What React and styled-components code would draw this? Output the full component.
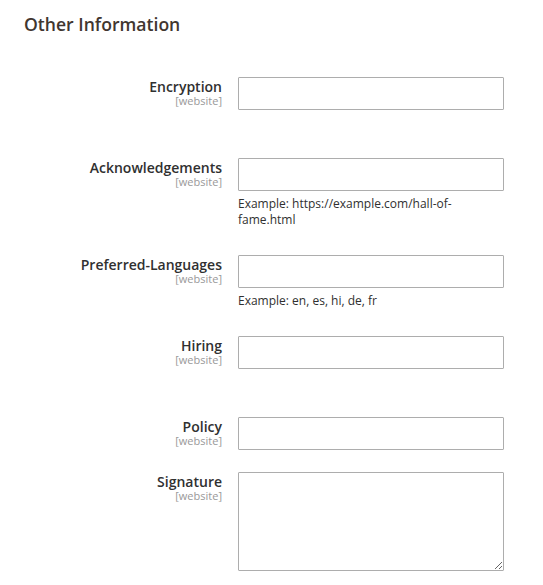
import React from 'react'
import styled, { createGlobalStyle } from 'styled-components'

const GlobalStyle = createGlobalStyle`
    body {
        margin: 0;
        background: #ffffff;
        font-family: "Open Sans", "Liberation Sans", sans-serif;
    }
`

const fields = [
    { label: 'Encryption', space: 48 },
    { label: 'Acknowledgements', note: 'Example: https://example.com/hall-of-fame.html', space: 27 },
    { label: 'Preferred-Languages', note: 'Example: en, es, hi, de, fr', space: 27 },
    { label: 'Hiring', space: 48 },
    { label: 'Policy', space: 22 },
    { label: 'Signature', multiline: true, space: 0 },
]

const App = () => {
    return (
        <>
            <GlobalStyle />
            <Section>
                <Legend>Other Information</Legend>
                {fields.map((field) => (
                    <Row key={field.label} $space={field.space}>
                        <Label>
                            <LabelText>{field.label}</LabelText>
                            <Scope>[website]</Scope>
                        </Label>
                        <Control>
                            {field.multiline ? <TextArea /> : <Input type="text" />}
                            {field.note && <Note>{field.note}</Note>}
                        </Control>
                    </Row>
                ))}
            </Section>
        </>
    )
}

export default App

const Section = styled.div`
    padding: 14px 0 0 24px;
`
const Legend = styled.h2`
    margin: 0 0 43px 0;
    font-size: 17.6px;
    line-height: 20px;
    font-weight: 600;
    color: #41362f;
`
const Row = styled.div`
    display: flex;
    gap: 16px;
    margin-bottom: ${props => props.$space}px;
`
const Label = styled.div`
    width: 198px;
    text-align: right;
    padding-top: 2px;
`
const LabelText = styled.div`
    font-size: 14px;
    line-height: 16px;
    font-weight: 600;
    color: #303030;
`
const Scope = styled.div`
    font-size: 11px;
    line-height: 12px;
    color: #999999;
`
const Control = styled.div`
    width: 266px;
`
const Input = styled.input`
    display: block;
    box-sizing: border-box;
    width: 266px;
    height: 33px;
    margin: 0;
    border: 1px solid #adadad;
    border-radius: 1px;
    background: #ffffff;
    outline: none;
`
const TextArea = styled.textarea`
    display: block;
    box-sizing: border-box;
    width: 266px;
    height: 99px;
    margin: 0;
    border: 1px solid #adadad;
    border-radius: 1px;
    background: #ffffff;
    outline: none;
`
const Note = styled.div`
    margin-top: 5px;
    max-width: 240px;
    font-size: 12px;
    line-height: 16px;
    color: #303030;
`
